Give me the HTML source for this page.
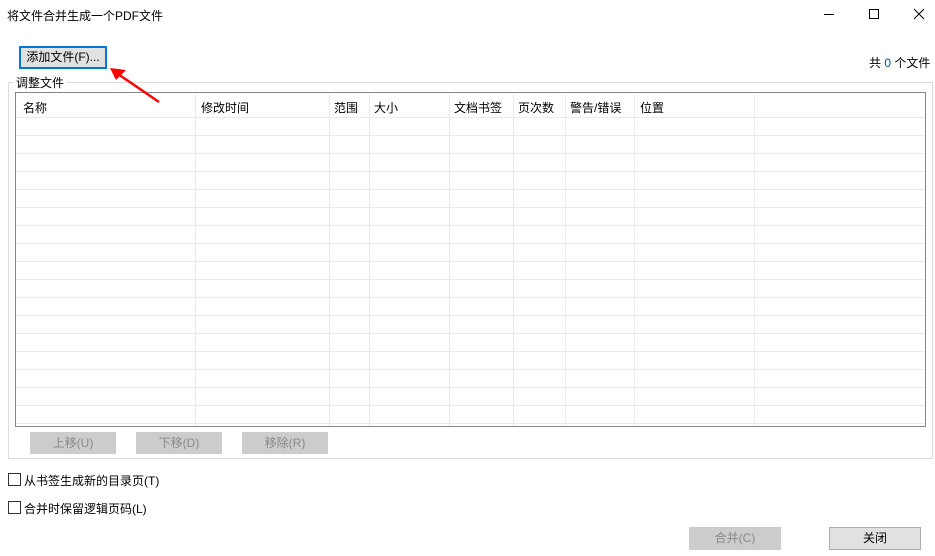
<!DOCTYPE html>
<html><head><meta charset="utf-8"><style>
*{margin:0;padding:0;box-sizing:border-box}
body{width:935px;height:556px;background:#fff;position:relative;overflow:hidden;font-family:"Liberation Sans","Noto Sans CJK SC",sans-serif;font-size:12px;color:#000}
.a{position:absolute;white-space:nowrap}
.btn{position:absolute;background:#ccc;border:1px solid #ccc;color:#888;text-align:center;line-height:20px;font-size:12px}
.hd{position:absolute;top:6px;font-size:12px}
.cl{position:absolute;top:1px;bottom:0;width:1px;background:#ebebeb}
.cb{position:absolute;width:13px;height:13px;border:1px solid #333;background:#fff}
</style></head><body>
<div class="a" style="left:7px;top:7px">将文件合并生成一个PDF文件</div>
<svg class="a" style="left:820px;top:5px" width="110" height="20">
<line x1="4" y1="9.5" x2="14" y2="9.5" stroke="#000"/>
<rect x="49.5" y="4.5" width="9" height="9" fill="none" stroke="#000"/>
<path d="M94 4L104 14M104 4L94 14" stroke="#000" stroke-width="1"/>
</svg>
<div class="a" style="left:19px;top:46px;width:88px;height:23px;border:2px solid #0078d7;background:#e1e1e1;text-align:center;line-height:19px">添加文件(F)...</div>
<div class="a" style="left:869px;top:54px">共 <span style="color:#0050a0">0</span> 个文件</div>
<div class="a" style="left:8px;top:82px;width:925px;height:377px;border:1px solid #dcdcdc"></div>
<div class="a" style="left:14px;top:74px;background:#fff;padding:0 2px">调整文件</div>
<div class="a" style="left:15px;top:92px;width:911px;height:335px;border:1px solid #828790;background:#fff;background-image:repeating-linear-gradient(to bottom,transparent 0 17px,#ebebeb 17px 18px);background-position:0 7px;">
<div class="a" style="left:0;top:0;right:0;height:24px;background:#fff"></div>
<div class="cl" style="left:179px"></div><div class="cl" style="left:313px"></div><div class="cl" style="left:353px"></div><div class="cl" style="left:433px"></div><div class="cl" style="left:497px"></div><div class="cl" style="left:549px"></div><div class="cl" style="left:618px"></div><div class="cl" style="left:738px"></div>
<div class="hd" style="left:7px">名称</div><div class="hd" style="left:185px">修改时间</div><div class="hd" style="left:318px">范围</div><div class="hd" style="left:358px">大小</div><div class="hd" style="left:438px">文档书签</div><div class="hd" style="left:502px">页次数</div><div class="hd" style="left:554px">警告/错误</div><div class="hd" style="left:624px">位置</div>
</div>
<div class="btn" style="left:30px;top:432px;width:86px;height:22px">上移(U)</div>
<div class="btn" style="left:136px;top:432px;width:86px;height:22px">下移(D)</div>
<div class="btn" style="left:242px;top:432px;width:86px;height:22px">移除(R)</div>
<div class="cb" style="left:8px;top:473px"></div><div class="a" style="left:24px;top:472px">从书签生成新的目录页(T)</div>
<div class="cb" style="left:8px;top:501px"></div><div class="a" style="left:24px;top:500px">合并时保留逻辑页码(L)</div>
<div class="btn" style="left:689px;top:527px;width:92px;height:23px">合并(C)</div>
<div class="btn" style="left:829px;top:527px;width:92px;height:23px;background:#e1e1e1;border-color:#adadad;color:#000">关闭</div>
<svg class="a" style="left:0;top:0" width="935" height="556"><line x1="159" y1="102" x2="118" y2="74" stroke="#f00" stroke-width="2.5"/><polygon points="110,68 126,70 116,80" fill="#f00"/></svg>
</body></html>
